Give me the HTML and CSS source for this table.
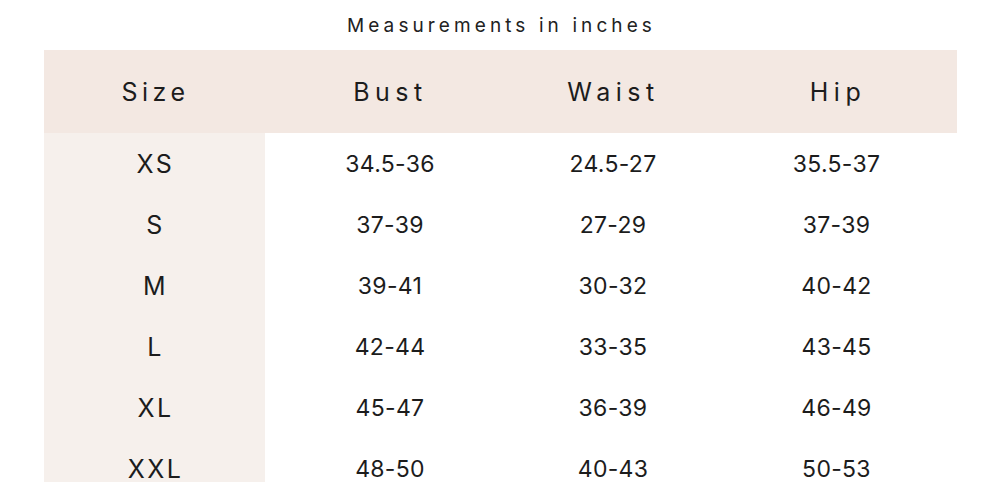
FILE: index.html
```html
<!DOCTYPE html>
<html lang="en">
<head>
<meta charset="utf-8">
<title>Size chart</title>
<link rel="stylesheet" href="styles.css">
</head>
<body>
<div class="page">
  <p class="caption">Measurements in inches</p>
  <div class="chart">
    <div class="row head">
      <div class="cell size">Size</div>
      <div class="cell">Bust</div>
      <div class="cell">Waist</div>
      <div class="cell last">Hip</div>
    </div>
    <div class="row">
      <div class="cell size">XS</div>
      <div class="cell">34.5-36</div>
      <div class="cell">24.5-27</div>
      <div class="cell last">35.5-37</div>
    </div>
    <div class="row">
      <div class="cell size">S</div>
      <div class="cell">37-39</div>
      <div class="cell">27-29</div>
      <div class="cell last">37-39</div>
    </div>
    <div class="row">
      <div class="cell size">M</div>
      <div class="cell">39-41</div>
      <div class="cell">30-32</div>
      <div class="cell last">40-42</div>
    </div>
    <div class="row">
      <div class="cell size">L</div>
      <div class="cell">42-44</div>
      <div class="cell">33-35</div>
      <div class="cell last">43-45</div>
    </div>
    <div class="row">
      <div class="cell size">XL</div>
      <div class="cell">45-47</div>
      <div class="cell">36-39</div>
      <div class="cell last">46-49</div>
    </div>
    <div class="row">
      <div class="cell size">XXL</div>
      <div class="cell">48-50</div>
      <div class="cell">40-43</div>
      <div class="cell last">50-53</div>
    </div>
  </div>
</div>
</body>
</html>
```
FILE: styles.css
```css
html, body {
  margin: 0;
  padding: 0;
  background: #ffffff;
}
body {
  font-family: Inter, "Noto Sans", sans-serif;
  color: #1c1c1c;
  overflow: hidden;
  height: 482px;
}
.page {
  width: 999px;
}
.caption {
  margin: 0;
  height: 50px;
  padding-left: 4px;
  box-sizing: border-box;
  display: flex;
  align-items: center;
  justify-content: center;
  font-size: 19px;
  letter-spacing: 4.1px;
  font-weight: 400;
  color: #222;
}
.chart {
  margin: 0 42px 0 44px;
  display: flex;
  flex-direction: column;
}
.row {
  display: grid;
  grid-template-columns: 221px 250px 196px 246px;
  height: 61px;
}
.row.head {
  height: 83px;
  background: #f3e8e2;
}
.cell {
  display: flex;
  align-items: center;
  justify-content: center;
  font-size: 23px;
  letter-spacing: 0.3px;
}
.cell.last {
  padding-left: 5px;
}
.head .cell {
  font-size: 25px;
  letter-spacing: 5.5px;
  padding-left: 1px;
  padding-top: 0;
}
.head .cell.last {
  padding-left: 8px;
}
.cell.size {
  background: #f6f0ec;
  font-size: 25px;
  letter-spacing: 2.5px;
  padding-left: 2px;
}
.head .cell.size {
  background: transparent;
  letter-spacing: 4.5px;
  padding-left: 2px;
}
```
